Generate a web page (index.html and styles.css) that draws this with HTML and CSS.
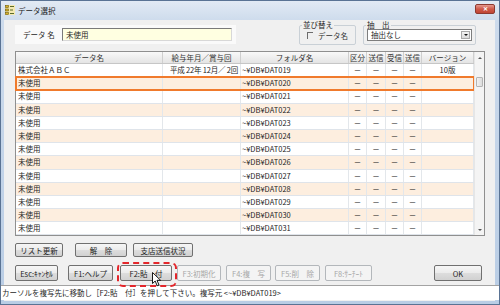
FILE: index.html
```html
<!DOCTYPE html>
<html lang="ja">
<head>
    <meta charset="UTF-8">
    <title>データ選択</title>
    <link rel="stylesheet" href="styles.css">
</head>
<body>
    <div class="window">
        <div class="titlebar">
            <svg class="app-icon" width="10" height="10" viewBox="0 0 10 10">
                <rect x="0" y="0" width="10" height="10" fill="#f4e9b0"/>
                <rect x="0.5" y="0.5" width="3" height="2" fill="#d9b22a" stroke="#6b5a10" stroke-width="0.6"/>
                <rect x="0.5" y="4" width="3" height="2" fill="#d9b22a" stroke="#6b5a10" stroke-width="0.6"/>
                <rect x="0.5" y="7.5" width="3" height="2" fill="#d9b22a" stroke="#6b5a10" stroke-width="0.6"/>
                <rect x="5" y="1" width="4" height="1" fill="#5a6a2a"/>
                <rect x="5" y="4.5" width="3" height="1" fill="#5a6a2a"/>
                <rect x="5" y="8" width="4" height="1" fill="#5a6a2a"/>
            </svg>
            <span class="title">データ選択</span>
            <span class="close">✕</span>
        </div>

        <div class="client">
            <div class="top">
                <div class="name-panel">
                    <span class="name-label">データ 名</span>
                    <div class="name-input">未使用</div>
                </div>
                <fieldset class="group sort">
                    <legend>並び替え</legend>
                    <div class="check"><span class="box"></span>データ名</div>
                </fieldset>
                <fieldset class="group filter">
                    <legend>抽　出</legend>
                    <div class="combo">
                        <span>抽出なし</span>
                        <span class="combo-btn"><span class="tri-down"></span></span>
                    </div>
                </fieldset>
            </div>

            <div class="grid">
                <div class="table">
                    <div class="head">
                        <div>データ名</div>
                        <div>給与年月／賞与回</div>
                        <div>フォルダ名</div>
                        <div>区分</div>
                        <div>送信</div>
                        <div>受信</div>
                        <div>送信</div>
                        <div>バージョン</div>
                    </div>
                    <div class="rows">
                        <div class="row">
                            <div>株式会社ＡＢＣ</div><div class="r">平成 22年 12月／ 2回</div><div>~¥DB¥DAT019</div>
                            <div class="c">－</div><div class="c">－</div><div class="c">－</div><div class="c">－</div><div class="c">10版</div>
                        </div>
                        <div class="row selected">
                            <div>未使用</div><div></div><div>~¥DB¥DAT020</div>
                            <div class="c">－</div><div class="c">－</div><div class="c">－</div><div class="c">－</div><div></div>
                        </div>
                        <div class="row">
                            <div>未使用</div><div></div><div>~¥DB¥DAT021</div>
                            <div class="c">－</div><div class="c">－</div><div class="c">－</div><div class="c">－</div><div></div>
                        </div>
                        <div class="row">
                            <div>未使用</div><div></div><div>~¥DB¥DAT022</div>
                            <div class="c">－</div><div class="c">－</div><div class="c">－</div><div class="c">－</div><div></div>
                        </div>
                        <div class="row">
                            <div>未使用</div><div></div><div>~¥DB¥DAT023</div>
                            <div class="c">－</div><div class="c">－</div><div class="c">－</div><div class="c">－</div><div></div>
                        </div>
                        <div class="row">
                            <div>未使用</div><div></div><div>~¥DB¥DAT024</div>
                            <div class="c">－</div><div class="c">－</div><div class="c">－</div><div class="c">－</div><div></div>
                        </div>
                        <div class="row">
                            <div>未使用</div><div></div><div>~¥DB¥DAT025</div>
                            <div class="c">－</div><div class="c">－</div><div class="c">－</div><div class="c">－</div><div></div>
                        </div>
                        <div class="row">
                            <div>未使用</div><div></div><div>~¥DB¥DAT026</div>
                            <div class="c">－</div><div class="c">－</div><div class="c">－</div><div class="c">－</div><div></div>
                        </div>
                        <div class="row">
                            <div>未使用</div><div></div><div>~¥DB¥DAT027</div>
                            <div class="c">－</div><div class="c">－</div><div class="c">－</div><div class="c">－</div><div></div>
                        </div>
                        <div class="row">
                            <div>未使用</div><div></div><div>~¥DB¥DAT028</div>
                            <div class="c">－</div><div class="c">－</div><div class="c">－</div><div class="c">－</div><div></div>
                        </div>
                        <div class="row">
                            <div>未使用</div><div></div><div>~¥DB¥DAT029</div>
                            <div class="c">－</div><div class="c">－</div><div class="c">－</div><div class="c">－</div><div></div>
                        </div>
                        <div class="row">
                            <div>未使用</div><div></div><div>~¥DB¥DAT030</div>
                            <div class="c">－</div><div class="c">－</div><div class="c">－</div><div class="c">－</div><div></div>
                        </div>
                        <div class="row">
                            <div>未使用</div><div></div><div>~¥DB¥DAT031</div>
                            <div class="c">－</div><div class="c">－</div><div class="c">－</div><div class="c">－</div><div></div>
                        </div>
                    </div>
                </div>
                <div class="vscroll">
                    <div class="sb-btn"><span class="tri-up"></span></div>
                    <div class="sb-track"><div class="sb-thumb"></div></div>
                    <div class="sb-btn"><span class="tri-down small"></span></div>
                </div>
            </div>

            <div class="btn-row">
                <button class="btn" id="refresh">リスト更新</button>
                <button class="btn" id="release">解　除</button>
                <button class="btn" id="branch">支店送信状況</button>
            </div>

            <div class="btn-row fkeys">
                <button class="btn" id="esc">Esc:ｷｬﾝｾﾙ</button>
                <button class="btn" id="f1">F1:ヘルプ</button>
                <div class="focus-wrap">
                    <button class="btn" id="f2">F2:貼　付</button>
                    <span class="marker"></span>
                    <svg class="cursor" width="10" height="15" viewBox="0 0 10 15">
                        <path d="M0.5 0.5 L0.5 11.5 L3.2 9 L5.2 13.8 L7 13 L5 8.3 L8.6 8.3 Z" fill="#fff" stroke="#000" stroke-width="0.9" stroke-linejoin="round"/>
                    </svg>
                </div>
                <button class="btn" id="f3" disabled>F3:初期化</button>
                <button class="btn" id="f4" disabled>F4:複　写</button>
                <button class="btn" id="f5" disabled>F5:削　除</button>
                <button class="btn" id="f8" disabled>F8:ｻｰﾁｰﾄ</button>
                <button class="btn" id="ok">OK</button>
            </div>

            <div class="status">カーソルを複写先に移動し［F2:貼　付］を押して下さい。複写元 &lt;~¥DB¥DAT019&gt;</div>
        </div>
    </div>
</body>
</html>
```

FILE: styles.css
```css
body {
    margin: 0;
    font-family: "Noto Sans CJK JP", "Noto Sans", sans-serif;
    font-size: 7.5px;
    color: #1e1e1e;
    background: #ffffff;
}

.window {
    width: 500px;
    height: 305px;
    box-sizing: border-box;
    border: 1px solid #5a7394;
    background: linear-gradient(to bottom, #e2eaf4 0, #cddbec 20px, #b9cde5 100%);
    padding: 0 4px 3px 3px;
    display: flex;
    flex-direction: column;
}

/* title bar */
.titlebar {
    height: 19px;
    margin: 0 -4px 0 -3px;
    padding: 0 4px;
    display: flex;
    align-items: center;
}

.app-icon {
    margin-top: -1px;
}

.title {
    margin-left: 3px;
    font-size: 7.5px;
    color: #1b1b1b;
}

.close {
    margin-left: auto;
    margin-top: -4px;
    width: 20px;
    height: 10px;
    box-sizing: border-box;
    border: 1px solid #8d3a30;
    border-radius: 2px;
    background: linear-gradient(to bottom, #e6998e, #cf5a4a 50%, #c04534);
    color: #fff;
    font-size: 6px;
    line-height: 8px;
    text-align: center;
    font-weight: bold;
}

/* client area */
.client {
    flex: 1;
    background: #f0f0f0;
    display: flex;
    flex-direction: column;
}

.top {
    height: 31px;
    display: flex;
    align-items: flex-start;
    padding-left: 11px;
}

.name-panel {
    margin-top: 5px;
    width: 221px;
    height: 19px;
    background: #fafafa;
    display: flex;
    align-items: center;
}

.name-label {
    margin-left: 8px;
    width: 39px;
}

.name-input {
    width: 170px;
    height: 13px;
    box-sizing: border-box;
    border: 1px solid #7a7a7a;
    border-right-color: #d8d8d8;
    border-bottom-color: #d8d8d8;
    background: #ffffe1;
    padding-left: 3px;
    line-height: 11px;
}

.group {
    margin: 1px 0 0 0;
    padding: 0;
    height: 24px;
    box-sizing: border-box;
    border: 1px solid #c9d0d6;
    border-radius: 2px;
}

.group legend {
    padding: 0 1px;
    margin-left: 2px;
    line-height: 8px;
    font-size: 7.5px;
}

.sort {
    margin-left: 63px;
    width: 57px;
}

.check {
    margin: 2px 0 0 7px;
    display: flex;
    align-items: center;
    line-height: 9px;
    color: #333;
}

.check .box {
    width: 5px;
    height: 6px;
    border-top: 1px solid #6d6d6d;
    border-left: 1px solid #6d6d6d;
    margin-right: 5px;
}

.filter {
    margin-left: 7px;
    width: 113px;
}

.combo {
    margin: 0 3px;
    height: 12px;
    box-sizing: border-box;
    border: 1px solid #7e7e7e;
    background: #ffffff;
    display: flex;
    align-items: center;
    padding-left: 3px;
    line-height: 10px;
}

.combo-btn {
    margin-left: auto;
    margin-right: 1px;
    width: 9px;
    height: 8px;
    background: linear-gradient(to bottom, #f4f4f4, #dadada);
    border: 1px solid #a9a9a9;
    box-sizing: border-box;
    display: flex;
    align-items: center;
    justify-content: center;
}

.tri-down {
    width: 0;
    height: 0;
    border-left: 2px solid transparent;
    border-right: 2px solid transparent;
    border-top: 2px solid #111;
}

.tri-up {
    width: 0;
    height: 0;
    border-left: 2px solid transparent;
    border-right: 2px solid transparent;
    border-bottom: 2px solid #555;
}

.tri-down.small {
    border-top-color: #555;
}

/* list */
.grid {
    margin-left: 11px;
    width: 470px;
    box-sizing: border-box;
    border: 1px solid #8f8f8f;
    background: #ffffff;
    display: flex;
}

.table {
    width: 458px;
}

.head,
.row {
    display: grid;
    grid-template-columns: 147px 78px 108px 18px 19px 18px 18px 52px;
}

.head {
    height: 12px;
    background: linear-gradient(to bottom, #f9f9f9, #e4e4e4);
    border-bottom: 1px solid #c6c6c6;
    box-sizing: border-box;
    color: #333;
}

.head div {
    border-right: 1px solid #cfcfcf;
    text-align: center;
    line-height: 11px;
    white-space: nowrap;
    overflow: hidden;
}

.row {
    height: 13.2px;
    box-sizing: border-box;
    border-bottom: 1px solid #dfe4ea;
}

.rows .row:nth-child(even) {
    background: #fdeedf;
}

.row div {
    border-right: 1px solid #e3e7eb;
    padding: 0 2px;
    line-height: 12.2px;
    white-space: nowrap;
    overflow: hidden;
}

.row div:nth-child(3) {
    padding-left: 1px;
}

.row .r {
    text-align: right;
    padding: 0 2px 0 0;
    letter-spacing: -0.2px;
}

.row .c {
    text-align: center;
    padding: 0;
}

.row.selected {
    outline: 2px solid #f07a2c;
    outline-offset: -1px;
}

.vscroll {
    width: 10px;
    background: #f4f4f4;
    border-left: 1px solid #e6e6e6;
    display: flex;
    flex-direction: column;
}

.sb-btn {
    height: 11px;
    display: flex;
    align-items: center;
    justify-content: center;
}

.sb-track {
    flex: 1;
}

.sb-thumb {
    margin: 14px 1px 0 1px;
    height: 10px;
    box-sizing: border-box;
    border: 1px solid #b4b4b4;
    border-radius: 1px;
    background: linear-gradient(to right, #f2f2f2, #dcdcdc);
}

/* buttons */
.btn-row {
    margin: 7px 0 0 11px;
    height: 14px;
    display: flex;
    gap: 6px;
}

.btn {
    height: 100%;
    margin: 0;
    padding: 0;
    box-sizing: border-box;
    border: 1px solid #707070;
    border-radius: 2px;
    background: linear-gradient(to bottom, #f6f6f6 0, #ebebeb 50%, #dddddd 51%, #d1d1d1 100%);
    font-family: inherit;
    font-size: 7.5px;
    color: #1e1e1e;
    white-space: nowrap;
}

.btn:disabled {
    border-color: #b3b7bb;
    background: #f4f4f4;
    color: #a8a8a8;
}

#refresh { width: 48px; }
#release { width: 52px; margin-left: 6px; }
#branch { width: 60px; }

.fkeys {
    margin-top: 8px;
    height: 16px;
    gap: 5px;
    padding-right: 13px;
}

#esc { width: 43px; }
#f1 { width: 45px; margin-left: 5px; }
#f2 { width: 52px; }
#f3 { width: 44px; }
#f4 { width: 45px; }
#f5 { width: 45px; margin-left: -1px; }
#f8 { width: 47px; }
#ok { width: 48px; margin-left: auto; }

.focus-wrap {
    position: relative;
    margin-left: 2px;
    height: 100%;
}

.marker {
    position: absolute;
    left: -3px;
    top: -3px;
    width: 60px;
    height: 25px;
    box-sizing: border-box;
    border: 2px dashed #e3262b;
    border-radius: 6px;
}

.cursor {
    position: absolute;
    left: 32px;
    top: 7px;
}

.status {
    margin: 4px -4px 0 -3px;
    height: 15px;
    box-sizing: border-box;
    border-top: 1px solid #a3a3a3;
    background: #ffffff;
    padding-left: 1px;
    line-height: 13px;
    white-space: nowrap;
    overflow: hidden;
}
```
